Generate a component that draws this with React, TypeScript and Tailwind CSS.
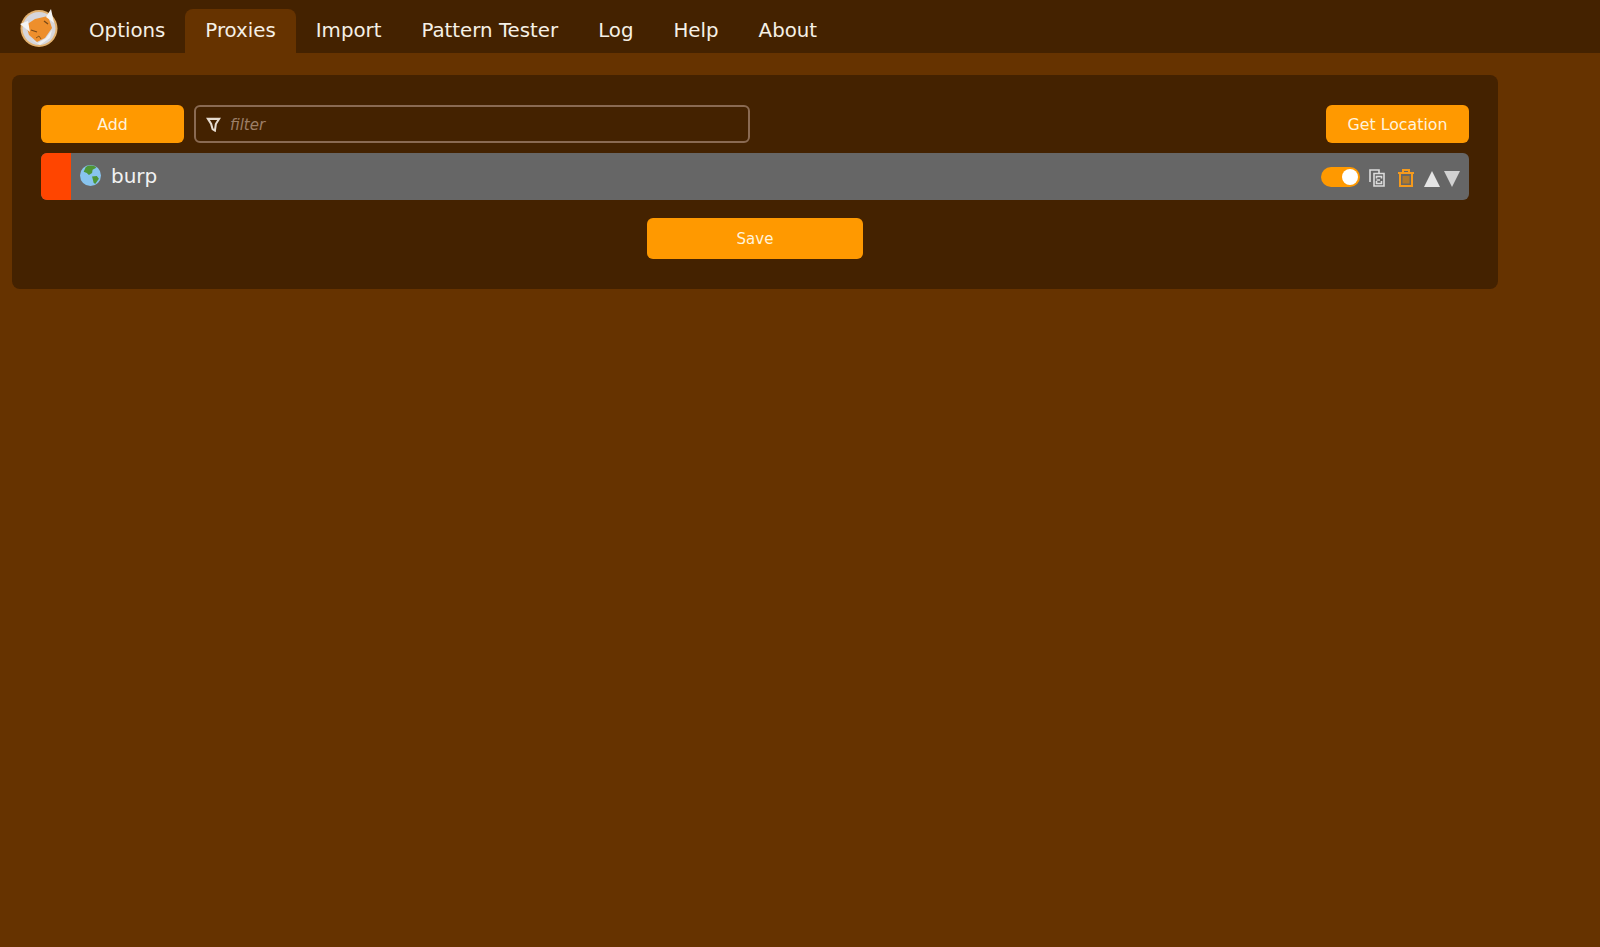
const navItems = ["Options", "Proxies", "Import", "Pattern Tester", "Log", "Help", "About"];

function FoxLogo() {
  return (
    <svg viewBox="0 0 40 40" className="h-10 w-10 shrink-0">
      <circle cx="20" cy="20.5" r="18.5" fill="#e3b270" />
      <circle cx="20" cy="20.5" r="16.5" fill="#d6d6dc" />
      <path d="M7 17 L16 11 L29 8 L33 20 L26 30 L18 34 L10 27 Z" fill="#ee8f2c" />
      <path d="M1 16 L9 13 L11 24 Z" fill="#f4f4f4" />
      <path d="M27 9 L32 1 L35 15 Z" fill="#f4f4f4" />
      <path d="M11 31 L19 35 L27 30 L33 22 L31 30 L21 37 Z" fill="#f0f0f0" />
      <path d="M12 22 L18 24 M25 13 L29 16" stroke="#7a4a18" strokeWidth="1.3" fill="none" />
      <path d="M17 30 L20 28 L22 31" stroke="#8a5518" strokeWidth="1" fill="none" />
    </svg>
  );
}

function Globe() {
  return (
    <svg viewBox="0 0 20 20" className="h-[21px] w-[21px] shrink-0">
      <circle cx="10" cy="10" r="10" fill="#88c4ee" />
      <path d="M5.5 1.8 C9 -0.4 14 0 15.5 2.5 L12 4.5 L11.5 7.5 L8.5 9.5 L6.5 7.5 L3.5 6.5 Z" fill="#4f9636" />
      <path d="M11.5 11 L16 10.5 L18 13 L14.5 18 L13 17 Z" fill="#4f9636" />
    </svg>
  );
}

function CopyIcon() {
  return (
    <svg viewBox="0 0 16 18" className="h-[18px] w-4 shrink-0" fill="none" stroke="#dcdcdc" strokeWidth="1.6">
      <path d="M1 13 V1 H10 V4" />
      <path d="M5 4.5 H15 V17 H5 Z" />
      <path d="M7.5 9.5 V7.5 H12.5 V9.5 M12.5 12 V14.5 H7.5 V12" />
      <path d="M7.5 11 H11" />
    </svg>
  );
}

function TrashIcon() {
  return (
    <svg viewBox="0 0 16 18" className="h-[18px] w-4 shrink-0" fill="none" stroke="#f59a1c" strokeWidth="2">
      <path d="M0 4 H16" />
      <path d="M5 4 V1 H11 V4" />
      <path d="M2 4 V17 H14 V4" />
      <rect x="4.5" y="7" width="7" height="7.5" fill="#b07a2e" stroke="none" />
    </svg>
  );
}

export default function App() {
  return (
    <div className="min-h-[947px] bg-[#663300] font-['DejaVu_Sans',sans-serif] text-[#f5f0e6]">
      <nav className="flex h-[53px] items-end bg-[#442200] pl-[19px]">
        <div className="mr-[10px] mb-[5px]">
          <FoxLogo />
        </div>
        {navItems.map((item) => (
          <a
            key={item}
            className={`flex h-11 items-center rounded-t-lg px-5 text-[19.8px] ${item === "Proxies" ? "bg-[#663300]" : ""}`}
          >
            {item}
          </a>
        ))}
      </nav>

      <section className="mt-[22px] ml-3 w-[1486px] rounded-lg bg-[#442200] px-[29px] pt-[30px] pb-[30px]">
        <div className="flex h-[38px] items-stretch">
          <button className="w-[143px] rounded-md bg-[#ff9900] pt-px text-[15.8px] text-[#fff3dc]">Add</button>
          <div className="ml-[10px] flex w-[556px] items-center gap-[9px] rounded-md border-2 border-[#8a6a52] pl-[10px]">
            <svg viewBox="0 0 16 16" className="h-[15px] w-[15px]" fill="none" stroke="#e6dcd0" strokeWidth="2.2">
              <path d="M2 2 H14 L10.5 7.5 L9.5 14.5 L7 13 L5.5 7.5 Z" />
            </svg>
            <span className="pt-0.5 text-[15px] text-[#9c7f68] italic">filter</span>
          </div>
          <button className="ml-auto w-[143px] rounded-md bg-[#ff9900] pt-px text-[15.8px] text-[#fff3dc]">
            Get Location
          </button>
        </div>

        <div className="mt-[10px] flex h-[47px] items-center overflow-hidden rounded-md bg-[#666666]">
          <div className="h-full w-[30px] bg-[#ff4500]" />
          <div className="mb-0.5 ml-[9px]">
            <Globe />
          </div>
          <span className="mb-0.5 ml-[10px] text-xl text-[#f2f2f2]">burp</span>
          <div className="ml-auto flex items-center pr-[9px]">
            <div className="flex h-5 w-[39px] items-center justify-end rounded-full bg-[#ff9900] pr-[2px]">
              <div className="h-4 w-4 rounded-full bg-white" />
            </div>
            <div className="mt-0.5 ml-[9px]">
              <CopyIcon />
            </div>
            <div className="mt-0.5 ml-[13px]">
              <TrashIcon />
            </div>
            <svg viewBox="0 0 36 16" className="mt-1 ml-[10px] h-4 w-9">
              <path d="M0 16 L8 0 L16 16 Z" fill="#e4e4e4" />
              <path d="M20 0 H36 L28 16 Z" fill="#d2d2d2" />
            </svg>
          </div>
        </div>

        <div className="mt-[18px] flex justify-center">
          <button className="h-[41px] w-[216px] rounded-md bg-[#ff9900] pt-0.5 text-[15px] text-[#fff3dc]">Save</button>
        </div>
      </section>
    </div>
  );
}
